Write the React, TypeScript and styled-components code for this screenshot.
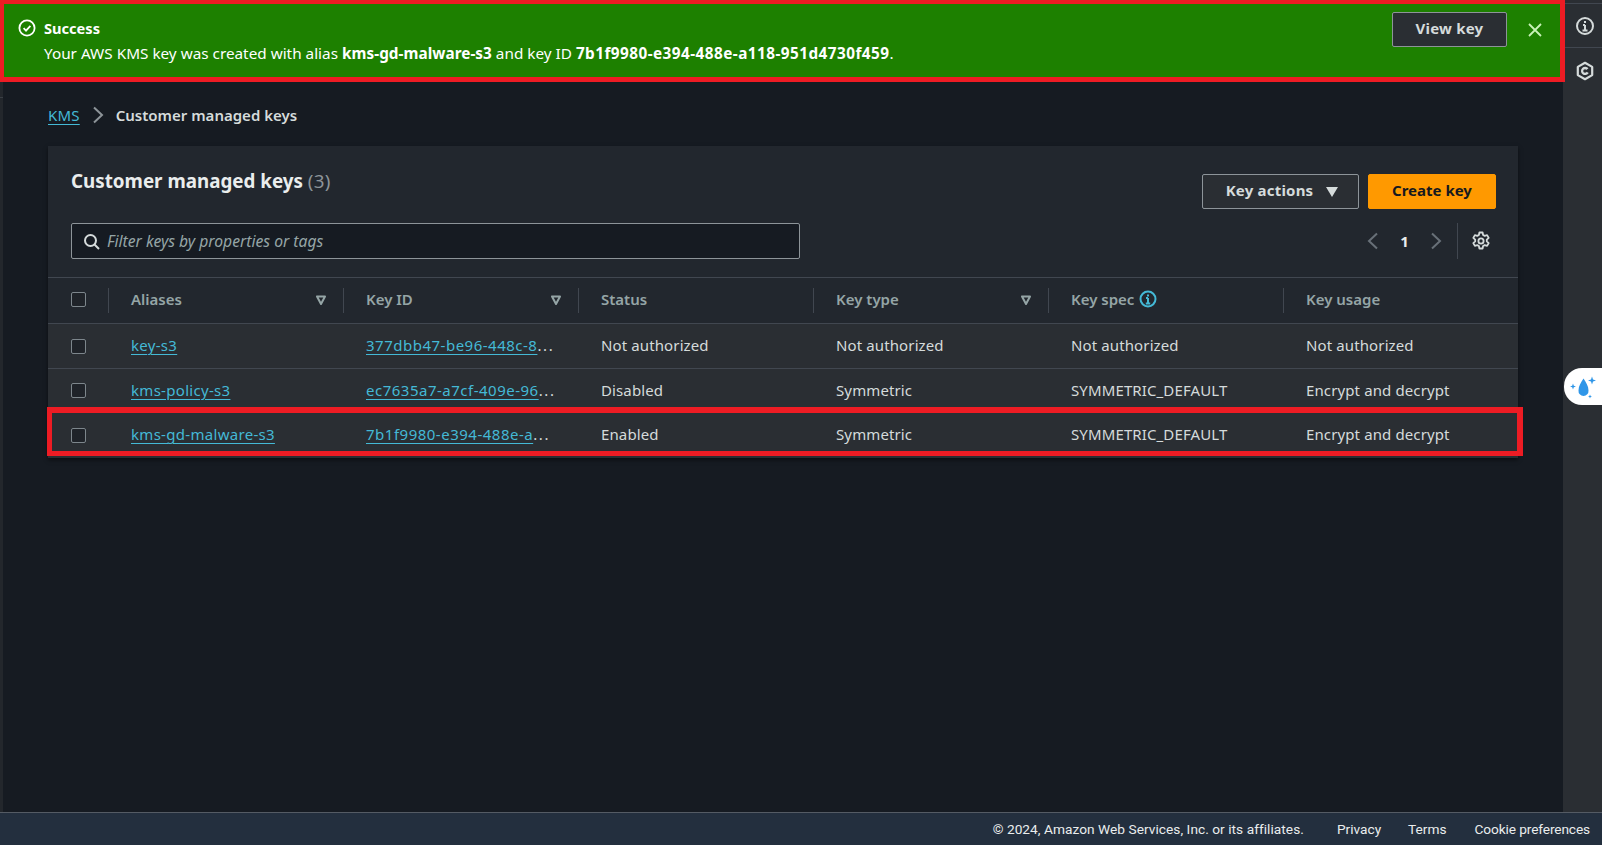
import React from "react";
import styled, { createGlobalStyle } from "styled-components";

const GlobalStyle = createGlobalStyle`
    html, body {
        margin: 0;
        padding: 0;
        height: 100%;
        background: #161b22;
        overflow: hidden;
    }
    body {
        font-family: "Noto Sans", "Open Sans", sans-serif;
        font-size: 15px;
        color: #d5dbdb;
    }
`;

const Page = styled.div`
    display: flex;
    flex-direction: column;
    width: 1602px;
    height: 845px;
`;

const Workspace = styled.div`
    flex: 1;
    display: flex;
    min-height: 0;
`;

const Main = styled.main`
    flex: 1;
    min-width: 0;
    display: flex;
    flex-direction: column;
`;

const Banner = styled.div`
    position: relative;
    z-index: 2;
    box-sizing: border-box;
    height: 82px;
    margin-right: -2px;
    border: 4px solid #ed1c24;
    border-bottom-width: 5px;
    border-right-width: 5px;
    background: #1d8000;
    display: flex;
    align-items: flex-start;
    color: #fff;
    padding: 8px 0 0 14px;
`;

const BannerIcon = styled.span`
    width: 18px;
    height: 18px;
    margin: 7px 8px 0 0;
    flex: none;
    color: #fff;
    svg {
        display: block;
    }
`;

const BannerText = styled.div`
    flex: 1;
    font-size: 15.3px;
    line-height: 25px;
    padding-top: 4px;
`;

const BannerTitle = styled.div`
    font-size: 14.6px;
    font-weight: 700;
`;

const AliasName = styled.strong`
    font-weight: 700;
    letter-spacing: 0.05px;
`;

const KeyIdValue = styled.strong`
    font-weight: 700;
    letter-spacing: 0.46px;
`;

const ViewKey = styled.button`
    box-sizing: border-box;
    width: 115px;
    height: 35px;
    flex: none;
    background: #2a2e33;
    border: 1px solid #8d9499;
    border-radius: 2px;
    color: #d5dbdb;
    font: 700 15px "Noto Sans", sans-serif;
    letter-spacing: 0.2px;
    padding: 0 0 4px;
`;

const CloseButton = styled.span`
    margin: 10px 17px 0 20px;
    width: 16px;
    height: 16px;
    flex: none;
    color: #c9f2b8;
    svg {
        display: block;
    }
`;

const Content = styled.div`
    position: relative;
    flex: 1;
    border-left: 3px solid #23272c;
    padding: 0 45px;

    &::before {
        content: "";
        position: absolute;
        left: -3px;
        top: 15px;
        width: 3px;
        height: 1px;
        background: #3a3f45;
    }
`;

const Breadcrumb = styled.nav`
    height: 64px;
    display: flex;
    align-items: center;
    gap: 12px;
    font-size: 15px;
    padding-top: 1px;
    box-sizing: border-box;
`;

const CrumbLink = styled.a`
    color: #44b9d6;
    letter-spacing: 0.2px;
    text-decoration: underline;
    text-underline-offset: 3px;
`;

const CrumbCurrent = styled.span`
    color: #d5dbdb;
    font-weight: 600;
`;

const Panel = styled.section`
    background: #22272e;
    box-shadow: 0 2px 4px rgba(0, 0, 0, 0.5);
`;

const PanelHeader = styled.div`
    box-sizing: border-box;
    height: 132px;
    padding: 23px 22px 0 23px;
    display: flex;
    justify-content: space-between;
    border-bottom: 1px solid #414750;
`;

const HeaderLeft = styled.div`
    display: flex;
    flex-direction: column;
    gap: 30px;
`;

const Title = styled.h1`
    margin: 0;
    font-size: 18.8px;
    line-height: 24px;
    font-weight: 700;
    color: #eaeded;
`;

const TitleCount = styled.span`
    font-weight: 400;
    color: #8d9499;
    letter-spacing: 0.3px;
`;

const Filter = styled.div`
    box-sizing: border-box;
    width: 729px;
    height: 36px;
    background: #161b22;
    border: 1px solid #8d9499;
    border-radius: 2px;
    display: flex;
    align-items: center;
    gap: 7px;
    padding-left: 11px;
    color: #95a5a6;
    font-style: italic;
    font-size: 15.7px;
    svg {
        flex: none;
    }
`;

const HeaderRight = styled.div`
    display: flex;
    flex-direction: column;
    align-items: flex-end;
    gap: 14px;
    margin-top: 5px;
`;

const Actions = styled.div`
    display: flex;
    gap: 9px;
`;

const ActionButton = styled.button<{ $primary?: boolean }>`
    box-sizing: border-box;
    height: 35px;
    width: ${(p) => (p.$primary ? "128px" : "157px")};
    border-radius: 2px;
    border: 1px solid ${(p) => (p.$primary ? "#ff9900" : "#8d9499")};
    background: ${(p) => (p.$primary ? "#ff9900" : "#2a2e33")};
    color: ${(p) => (p.$primary ? "#16191f" : "#d5dbdb")};
    font: 700 15px "Noto Sans", sans-serif;
    letter-spacing: ${(p) => (p.$primary ? "0" : "0.2px")};
    display: flex;
    align-items: center;
    justify-content: center;
    gap: 13px;
    padding: 0 0 3px ${(p) => (p.$primary ? "0" : "3px")};
    svg {
        margin-top: 3px;
    }
`;

const Pager = styled.div`
    display: flex;
    align-items: center;
    height: 36px;
    color: #687078;
    padding-right: 5px;
`;

const PageNumber = styled.span`
    width: 51px;
    text-align: center;
    font-weight: 700;
    color: #eaeded;
`;

const PagerIcon = styled.span`
    display: block;
    height: 18px;
    svg {
        display: block;
    }
`;

const PagerDivider = styled.span`
    width: 1px;
    height: 36px;
    background: #414750;
    margin: 0 13px 0 15px;
`;

const Gear = styled.span`
    display: block;
    height: 20px;
    color: #d5dbdb;
    svg {
        display: block;
    }
`;

const Columns = "60px repeat(6, 235px)";

const HeadRow = styled.div`
    display: grid;
    grid-template-columns: ${Columns};
    height: 46px;
    box-sizing: border-box;
    border-bottom: 1px solid #414750;
    align-items: center;
    color: #95a5a6;
    font-weight: 600;
`;

const HeadCell = styled.div`
    height: 25px;
    box-sizing: border-box;
    border-left: 1px solid #414750;
    padding: 0 16px 3px 22px;
    display: flex;
    align-items: center;
    justify-content: space-between;
`;

const CaretIcon = styled.svg`
    margin-top: 2px;
`;

const SpecLabel = styled.span`
    display: flex;
    align-items: center;
    gap: 5px;
    color: #95a5a6;
    svg {
        display: block;
    }
`;

const CheckCell = styled.div<{ $head?: boolean }>`
    padding-left: 23px;
    padding-bottom: ${(p) => (p.$head ? "2px" : "0")};
    display: flex;
    align-items: center;
`;

const Checkbox = styled.span`
    box-sizing: border-box;
    width: 15px;
    height: 15px;
    border: 1px solid #7d868c;
    border-radius: 2px;
    background: #1f2329;
`;

const Row = styled.div<{ $marked?: boolean; $height: number }>`
    position: relative;
    display: grid;
    grid-template-columns: ${Columns};
    height: ${(p) => p.$height}px;
    align-items: center;
    background: #2a2e33;
    border-bottom: ${(p) => (p.$marked ? "none" : "1px solid #414750")};
    box-sizing: border-box;
    color: #d5dbdb;
    ${(p) =>
        p.$marked &&
        `
        &::after {
            content: "";
            position: absolute;
            left: -1px;
            right: -5px;
            top: -6px;
            bottom: 2px;
            border: 5px solid #ed1c24;
            border-top-width: 6px;
            border-right-width: 6px;
            pointer-events: none;
        }
    `}
`;

const Cell = styled.div<{ $marked?: boolean }>`
    padding: 0 10px ${(p) => (p.$marked ? "3px" : "2px")} 23px;
    white-space: nowrap;
    letter-spacing: 0.12px;
`;

const AliasLink = styled.a`
    color: #44b9d6;
    letter-spacing: 0.3px;
    text-decoration: underline;
    text-underline-offset: 3px;
`;

const IdLink = styled.a`
    color: #44b9d6;
    letter-spacing: 0.5px;
    text-decoration: underline;
    text-underline-offset: 3px;
`;

const Dots = styled.span`
    color: #d5dbdb;
    letter-spacing: 1.6px;
`;

const SideBar = styled.aside`
    width: 39px;
    flex: none;
    background: #2a2e33;
    color: #d5dbdb;
    position: relative;
`;

const SideButton = styled.div<{ $first?: boolean }>`
    height: 45px;
    display: flex;
    align-items: center;
    justify-content: center;
    padding-left: 4px;
    box-sizing: border-box;
    border-top: ${(p) => (p.$first ? "1px solid #414750" : "none")};
    border-bottom: ${(p) => (p.$first ? "1px solid #414750" : "none")};
    margin-top: ${(p) => (p.$first ? "3px" : "0")};
    svg {
        display: block;
    }
`;

const AssistPill = styled.div`
    position: absolute;
    left: 1px;
    right: 0;
    top: 368px;
    height: 37px;
    background: #fff;
    border-radius: 18px 0 0 18px;
    display: flex;
    align-items: center;
    padding-left: 7px;
    svg {
        overflow: visible;
    }
`;

const Footer = styled.footer`
    height: 33px;
    box-sizing: border-box;
    background: #232f3e;
    border-top: 1px solid #545b64;
    display: flex;
    justify-content: flex-end;
    align-items: center;
    padding: 0 12px 1px 0;
    color: #eaeded;
    font-family: "Roboto", sans-serif;
    font-size: 13.7px;
`;

const Copyright = styled.span`
    letter-spacing: 0.04px;
    margin-right: 33px;
`;

const FooterLink = styled.span<{ $gap: number }>`
    margin-right: ${(p) => p.$gap}px;
`;

const CookieLink = styled.span`
    letter-spacing: -0.12px;
`;

const keys = [
    { alias: "key-s3", id: "377dbb47-be96-448c-8", status: "Not authorized", type: "Not authorized", spec: "Not authorized", usage: "Not authorized", height: 45 },
    { alias: "kms-policy-s3", id: "ec7635a7-a7cf-409e-96", status: "Disabled", type: "Symmetric", spec: "SYMMETRIC_DEFAULT", usage: "Encrypt and decrypt", height: 44 },
    { alias: "kms-gd-malware-s3", id: "7b1f9980-e394-488e-a", status: "Enabled", type: "Symmetric", spec: "SYMMETRIC_DEFAULT", usage: "Encrypt and decrypt", height: 45, marked: true },
];

const FilterCaret = () => (
    <CaretIcon width="12" height="12" viewBox="0 0 12 12" fill="none" stroke="currentColor" strokeWidth="2">
        <path d="M2 2.500h8L6 10z" strokeLinejoin="round" />
    </CaretIcon>
);

const App = () => {
    return (
        <>
            <GlobalStyle />
            <Page>
                <Workspace>
                    <Main>
                        <Banner>
                            <BannerIcon>
                                <svg width="18" height="18" viewBox="0 0 18 18" fill="none" stroke="currentColor" strokeWidth="1.8">
                                    <circle cx="9" cy="9" r="7.6" />
                                    <path d="M5.6 9.2l2.4 2.4 4.4-4.8" />
                                </svg>
                            </BannerIcon>
                            <BannerText>
                                <BannerTitle>Success</BannerTitle>
                                Your AWS KMS key was created with alias <AliasName>kms-gd-malware-s3</AliasName> and key ID{" "}
                                <KeyIdValue>7b1f9980-e394-488e-a118-951d4730f459</KeyIdValue>.
                            </BannerText>
                            <ViewKey>View key</ViewKey>
                            <CloseButton>
                                <svg width="16" height="16" viewBox="0 0 16 16" fill="none" stroke="currentColor" strokeWidth="1.8">
                                    <path d="M2 2l12 12M14 2L2 14" />
                                </svg>
                            </CloseButton>
                        </Banner>
                        <Content>
                            <Breadcrumb>
                                <CrumbLink>KMS</CrumbLink>
                                <svg width="12" height="18" viewBox="0 0 12 18" fill="none" stroke="#8d9499" strokeWidth="2">
                                    <path d="M2 1.500l8 7.500-8 7.500" />
                                </svg>
                                <CrumbCurrent>Customer managed keys</CrumbCurrent>
                            </Breadcrumb>
                            <Panel>
                                <PanelHeader>
                                    <HeaderLeft>
                                        <Title>
                                            Customer managed keys <TitleCount>(3)</TitleCount>
                                        </Title>
                                        <Filter>
                                            <svg width="17" height="17" viewBox="0 0 17 17" fill="none" stroke="#d5dbdb" strokeWidth="2">
                                                <circle cx="7.500" cy="7.500" r="5.500" />
                                                <path d="M11.500 11.500L16 16" />
                                            </svg>
                                            Filter keys by properties or tags
                                        </Filter>
                                    </HeaderLeft>
                                    <HeaderRight>
                                        <Actions>
                                            <ActionButton>
                                                Key actions
                                                <svg width="12" height="10" viewBox="0 0 12 10" fill="currentColor">
                                                    <path d="M0 0h12L6 10z" />
                                                </svg>
                                            </ActionButton>
                                            <ActionButton $primary>Create key</ActionButton>
                                        </Actions>
                                        <Pager>
                                            <PagerIcon>
                                                <svg width="12" height="18" viewBox="0 0 12 18" fill="none" stroke="currentColor" strokeWidth="2">
                                                    <path d="M10 1.500L2 9l8 7.500" />
                                                </svg>
                                            </PagerIcon>
                                            <PageNumber>1</PageNumber>
                                            <PagerIcon>
                                                <svg width="12" height="18" viewBox="0 0 12 18" fill="none" stroke="currentColor" strokeWidth="2">
                                                    <path d="M2 1.500L10 9l-8 7.500" />
                                                </svg>
                                            </PagerIcon>
                                            <PagerDivider />
                                            <Gear>
                                                <svg width="20" height="20" viewBox="0 0 20 20" fill="none" stroke="currentColor" strokeWidth="1.8">
                                                    <path d="M8.400 1.500h3.200l.5 2.500 1.600.9 2.400-.8 1.600 2.800-1.900 1.700v1.800l1.900 1.700-1.600 2.800-2.400-.8-1.600.9-.5 2.500H8.400l-.5-2.500-1.600-.9-2.400.8-1.600-2.800 1.900-1.700V8.600L2.300 6.900l1.600-2.800 2.400.8 1.600-.9z" strokeLinejoin="round" />
                                                    <circle cx="10" cy="10" r="2.600" />
                                                </svg>
                                            </Gear>
                                        </Pager>
                                    </HeaderRight>
                                </PanelHeader>
                                <HeadRow>
                                    <CheckCell $head>
                                        <Checkbox />
                                    </CheckCell>
                                    <HeadCell>
                                        Aliases <FilterCaret />
                                    </HeadCell>
                                    <HeadCell>
                                        Key ID <FilterCaret />
                                    </HeadCell>
                                    <HeadCell>Status</HeadCell>
                                    <HeadCell>
                                        Key type <FilterCaret />
                                    </HeadCell>
                                    <HeadCell>
                                        <SpecLabel>
                                            Key spec
                                            <svg width="18" height="18" viewBox="0 0 18 18" fill="none" stroke="#44b9d6" strokeWidth="2">
                                                <circle cx="9" cy="9" r="7.500" />
                                                <path d="M9 8v5.500M6.800 13.500h4.400M7 8h2" />
                                                <path d="M9 4.400v2" />
                                            </svg>
                                        </SpecLabel>
                                    </HeadCell>
                                    <HeadCell>Key usage</HeadCell>
                                </HeadRow>
                                {keys.map((key) => (
                                    <Row key={key.alias} $marked={key.marked} $height={key.height}>
                                        <CheckCell>
                                            <Checkbox />
                                        </CheckCell>
                                        <Cell $marked={key.marked}>
                                            <AliasLink>{key.alias}</AliasLink>
                                        </Cell>
                                        <Cell $marked={key.marked}>
                                            <IdLink>{key.id}</IdLink>
                                            <Dots>...</Dots>
                                        </Cell>
                                        <Cell $marked={key.marked}>{key.status}</Cell>
                                        <Cell $marked={key.marked}>{key.type}</Cell>
                                        <Cell $marked={key.marked}>{key.spec}</Cell>
                                        <Cell $marked={key.marked}>{key.usage}</Cell>
                                    </Row>
                                ))}
                            </Panel>
                        </Content>
                    </Main>
                    <SideBar>
                        <SideButton $first>
                            <svg width="20" height="20" viewBox="0 0 20 20" fill="none" stroke="currentColor" strokeWidth="2">
                                <circle cx="10" cy="10" r="8" />
                                <path d="M10 9v5M7.500 14.500h5M8 9h2M10 5v2" />
                            </svg>
                        </SideButton>
                        <SideButton>
                            <svg width="20" height="20" viewBox="0 0 20 20" fill="none" stroke="currentColor" strokeWidth="2.200">
                                <path d="M10 1.800l7.200 4.100v8.200L10 18.200l-7.200-4.100V5.900z" strokeLinejoin="round" />
                                <path d="M13.500 7.300A4.200 4.200 0 1 0 13.800 12L10 10z" fill="currentColor" stroke="none" />
                                <circle cx="10" cy="10" r="1.800" fill="#2a2e33" stroke="none" />
                            </svg>
                        </SideButton>
                        <AssistPill>
                            <svg width="26" height="26" viewBox="0 0 26 26" fill="#2f96e8">
                                <path d="M12.500 4.500c2.700 4.400 5 7.400 5 12A5 5 0 0 1 12.500 22a5 5 0 0 1-5-5.500c0-4.600 2.300-7.600 5-12z" />
                                <path d="M21 2.500l1 3 3 1-3 1-1 3-1-3-3-1 3-1zM2 9.500l.8 2.200 2.200.8-2.200.8L2 15.500l-.8-2.200-2.200-.8 2.200-.8zM19 20.500l.6 1.400 1.400.6-1.400.6-.6 1.400-.6-1.400-1.400-.6 1.400-.6z" />
                            </svg>
                        </AssistPill>
                    </SideBar>
                </Workspace>
                <Footer>
                    <Copyright>© 2024, Amazon Web Services, Inc. or its affiliates.</Copyright>
                    <FooterLink $gap={27}>Privacy</FooterLink>
                    <FooterLink $gap={28}>Terms</FooterLink>
                    <CookieLink>Cookie preferences</CookieLink>
                </Footer>
            </Page>
        </>
    );
};

export default App;
